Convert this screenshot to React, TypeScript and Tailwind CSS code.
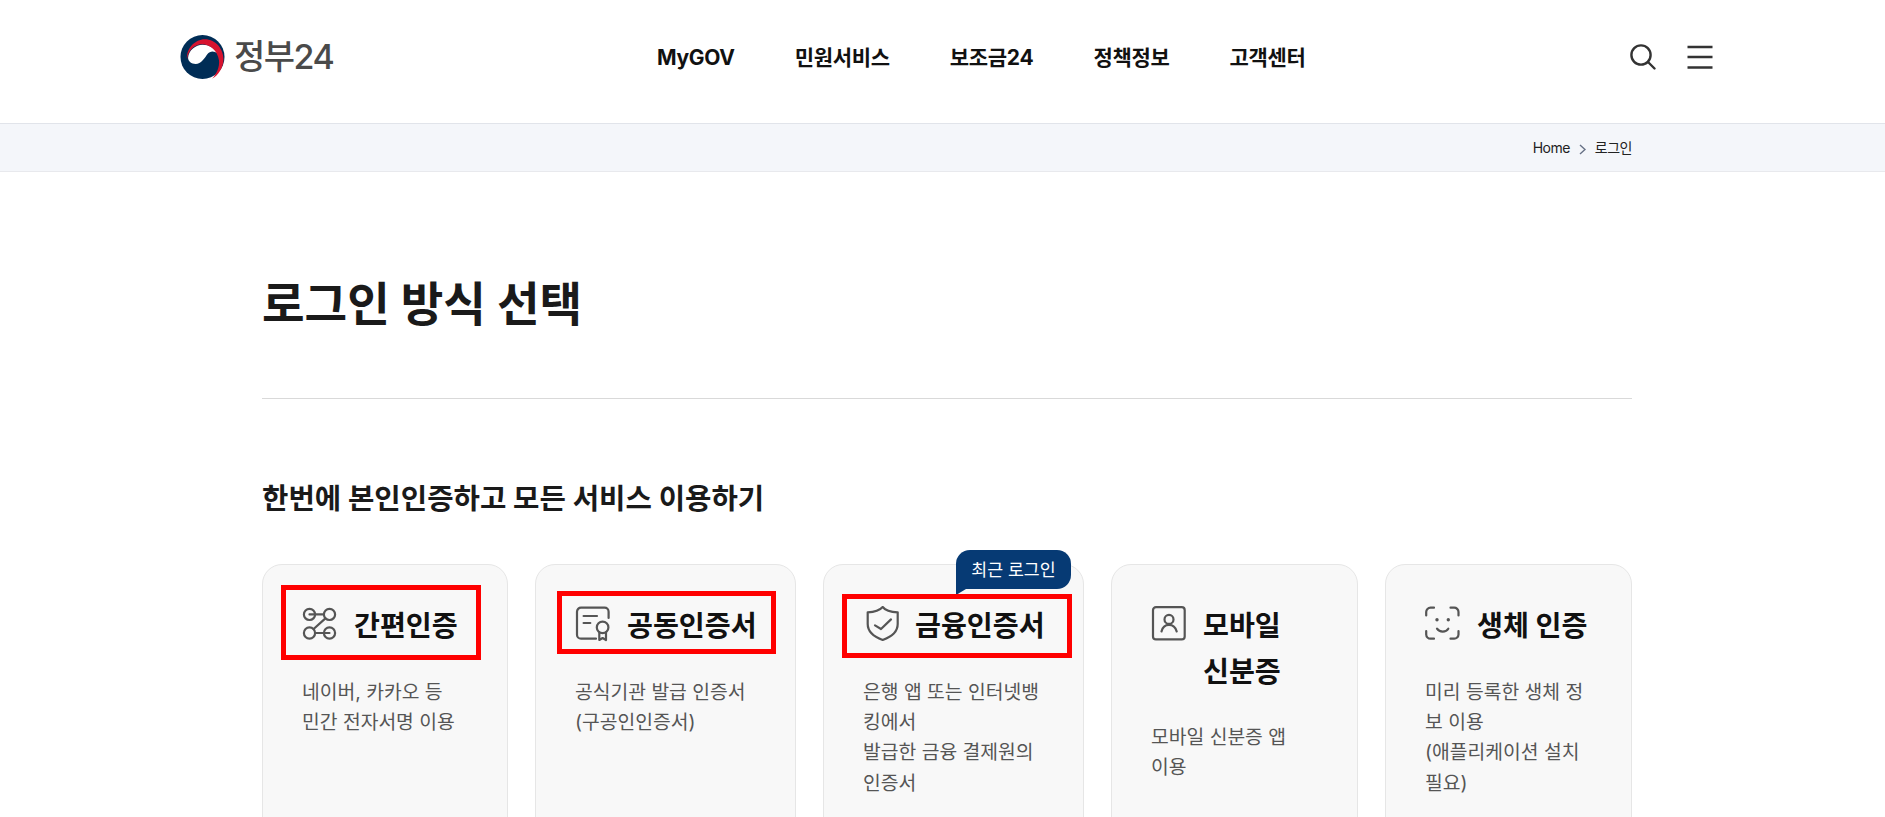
import { ReactNode } from 'react'

const iconClass = 'h-9 w-9 shrink-0 mt-[4px] fill-none stroke-[#555555] stroke-[2.2] [stroke-linecap:round] [stroke-linejoin:round]'

function LinkIcon() {
    return (
        <svg viewBox="0 0 36 36" className={iconClass}>
            <circle cx="7.5" cy="8.4" r="5.6" />
            <circle cx="27.5" cy="8.4" r="5.6" />
            <circle cx="7.5" cy="27" r="5.6" />
            <circle cx="27.5" cy="27" r="5.6" />
            <path d="M7.5 8.4H21.9M13.1 27H27.5M23.4 12.4L11.6 23" />
        </svg>
    )
}

function CertIcon() {
    return (
        <svg viewBox="0 0 36 36" className={iconClass}>
            <path d="M33.6 12V5.7a4 4 0 0 0-4-4H6a4 4 0 0 0-4 4v23a4 4 0 0 0 4 4H21" />
            <path d="M8.6 10H22M8.6 17H15.3" />
            <circle cx="27.6" cy="21.4" r="5.8" />
            <path d="M24.3 26.5V34l3.3-2 3.4 2v-7.5" />
        </svg>
    )
}

function ShieldIcon() {
    return (
        <svg viewBox="0 0 36 36" className={iconClass}>
            <path d="M19.7 1C22 4 27 6 34.7 6.3V18C34.7 26 28 31 19.7 34C11.5 31 4.7 26 4.7 18V6.3C12 6 17 4 19.7 1Z" />
            <path d="M12 19.4L18 23L28 13.4" />
        </svg>
    )
}

function PersonIcon() {
    return (
        <svg viewBox="0 0 36 36" className={iconClass}>
            <rect x="2" y="1.2" width="31.7" height="32.2" rx="3" />
            <circle cx="18" cy="13.4" r="4.5" />
            <path d="M10.5 25.5C11.5 21 14.5 18.8 18 18.8C21.5 18.8 24.5 21 25.7 25.5" />
        </svg>
    )
}

function FaceIcon() {
    return (
        <svg viewBox="0 0 36 36" className={iconClass}>
            <path d="M1.2 9.5V6a4.3 4.3 0 0 1 4.3-4.3H9M25.5 1.7H29a4.3 4.3 0 0 1 4.5 4.3v3.5M33.5 25v3.5a4.3 4.3 0 0 1-4.5 4.2h-3.5M9 32.7H5.5a4.3 4.3 0 0 1-4.3-4.2V25" />
            <path d="M12 22.7C14.5 26.5 21 26.5 23.3 22.7" />
            <circle cx="12" cy="13.7" r="1.7" className="fill-[#555555] stroke-none" />
            <circle cx="23.3" cy="13.7" r="1.7" className="fill-[#555555] stroke-none" />
        </svg>
    )
}

function Emblem() {
    return (
        <svg viewBox="0 0 128 128" className="h-[44px] w-[45px] shrink-0">
            <circle cx="64" cy="64" r="64" fill="#002d56" />
            <path d="M22 66C24 44 44 28 64 28C84 28 100 38 108 54C98 46 86 46 78 56C70 68 60 84 44 84C32 84 22 76 22 66Z" fill="#ffffff" />
            <path d="M19 70C16 38 44 12 70 12C104 12 125 42 125 70C125 95 110 118 92 127C106 112 114 92 112 74C108 46 86 27 62 27C40 27 22 46 19 70Z" fill="#d7132f" />
        </svg>
    )
}

interface LoginCard {
    title: string
    icon: ReactNode
    desc: ReactNode
    badge?: boolean
    marker?: string
}

const cards: LoginCard[] = [
    {
        title: '간편인증',
        icon: <LinkIcon />,
        desc: <>네이버, 카카오 등<br />민간 전자서명 이용</>,
        marker: 'left-[18px] top-[20px] h-[75px] w-[200px]',
    },
    {
        title: '공동인증서',
        icon: <CertIcon />,
        desc: <>공식기관 발급 인증서<br />(구공인인증서)</>,
        marker: 'left-[21px] top-[26px] h-[63px] w-[219px]',
    },
    {
        title: '금융인증서',
        icon: <ShieldIcon />,
        desc: <>은행 앱 또는 인터넷뱅킹에서<br />발급한 금융 결제원의 인증서</>,
        badge: true,
        marker: 'left-[18px] top-[29px] h-[64px] w-[230px]',
    },
    {
        title: '모바일 신분증',
        icon: <PersonIcon />,
        desc: <>모바일 신분증 앱<br />이용</>,
    },
    {
        title: '생체 인증',
        icon: <FaceIcon />,
        desc: <>미리 등록한 생체 정보 이용<br />(애플리케이션 설치 필요)</>,
    },
]

export default function App() {
    return (
        <div className="h-screen overflow-hidden bg-white font-['Inter','Noto_Sans_CJK_KR','Liberation_Sans',sans-serif] text-[#1a1a1a]">
            <header className="flex h-[124px] items-center border-b border-[#e1e4ea] pb-[9px] pl-[180px] pr-[172px]">
                <a className="flex w-[477px] items-center gap-[9px]">
                    <Emblem />
                    <span className="text-[34px] font-medium leading-none tracking-[-1.5px] text-[#4a4a4a]">정부24</span>
                </a>
                <nav className="flex gap-[60px] text-[21px] font-bold leading-none tracking-[-0.3px] text-[#111111]">
                    <span>MyGOV</span>
                    <span>민원서비스</span>
                    <span>보조금24</span>
                    <span>정책정보</span>
                    <span>고객센터</span>
                </nav>
                <div className="ml-auto flex items-center gap-[31px]">
                    <svg viewBox="0 0 26 26" className="h-[26px] w-[26px] fill-none stroke-[#333333] stroke-[2.4]">
                        <circle cx="11" cy="11" r="9.6" />
                        <path d="M18 18L24.5 24.5" strokeLinecap="round" />
                    </svg>
                    <svg viewBox="0 0 26 24" className="h-[24px] w-[26px] fill-none stroke-[#333333] stroke-[2.4]">
                        <path d="M0.5 2H25.5M0.5 12H25.5M0.5 22.5H25.5" />
                    </svg>
                </div>
            </header>

            <div className="flex h-[48px] items-center justify-end gap-[9px] border-b border-[#e8e9ed] bg-[#f4f6fa] pr-[253px] text-[14px] tracking-[-0.5px] text-[#222222]">
                <span>Home</span>
                <svg viewBox="0 0 7 11" className="mt-[3px] h-[11px] w-[7px] fill-none stroke-[#667085] stroke-[1.4]">
                    <path d="M1 1L6 5.5L1 10" />
                </svg>
                <span>로그인</span>
            </div>

            <main className="mx-[262px] w-[1370px]">
                <h1 className="mt-[100px] text-[46.3px] font-bold leading-[64px] text-[#1a1a1a]">로그인 방식 선택</h1>
                <hr className="mt-[62px] border-[#d9d9d9]" />
                <h2 className="mt-[77px] text-[28.7px] font-bold leading-[45px] text-[#1a1a1a]">
                    한번에 본인인증하고 모든 서비스 이용하기
                </h2>

                <div className="mt-[43px] grid grid-cols-[246px_261px_261px_247px_247px] gap-[27px]">
                    {cards.map((card) => (
                        <div
                            key={card.title}
                            className="relative min-h-[320px] rounded-[20px] border border-[#e6e6e6] bg-[#f8f8f8] pl-[39px] pr-[30px] pt-[37px]"
                        >
                            <div className="flex gap-[16px]">
                                {card.icon}
                                <h3 className="pt-[2px] text-[28.2px] font-bold leading-[45.5px] text-[#111111] [word-break:keep-all]">{card.title}</h3>
                            </div>
                            <p className="mr-[10px] mt-[27px] text-[19.3px] leading-[30.4px] text-[#555555]">{card.desc}</p>

                            {card.badge && (
                                <span className="absolute right-[12px] top-[-15px] flex h-[39px] w-[115px] items-center justify-center rounded-[14px] rounded-bl-none bg-[#063a74] text-[17.3px] text-white">
                                    최근 로그인
                                    <i className="absolute left-0 top-full h-[6px] w-[10px] bg-[#063a74] [clip-path:polygon(0_0,100%_0,0_100%)]" />
                                </span>
                            )}
                            {card.marker && <div className={`absolute border-[5px] border-[#ff0000] ${card.marker}`} />}
                        </div>
                    ))}
                </div>
            </main>
        </div>
    )
}
